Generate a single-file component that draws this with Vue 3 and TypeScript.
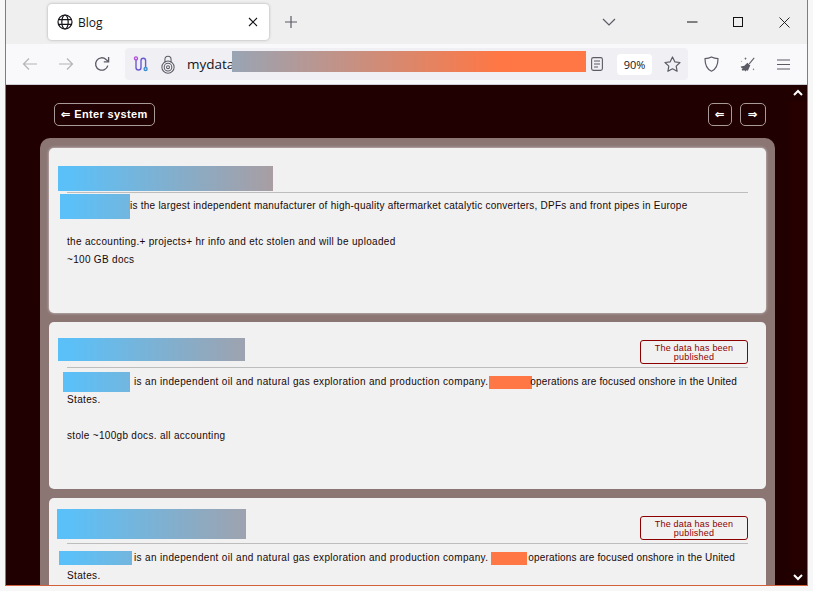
<template>
  <div class="screen">
    <div class="window">
      <div class="tabstrip">
        <div class="tab">
          <svg class="globe" width="16" height="16" viewBox="0 0 16 16" fill="none" stroke="#15141a" stroke-width="1.2">
            <circle cx="8" cy="8" r="7" />
            <ellipse cx="8" cy="8" rx="3.2" ry="7" />
            <path d="M1.2 5.6h13.6M1.2 10.4h13.6" />
          </svg>
          <span class="tab-title">Blog</span>
          <svg class="tab-close" width="10" height="10" viewBox="0 0 10 10" stroke="#15141a" stroke-width="1.1">
            <path d="M1 1l8 8M9 1l-8 8" />
          </svg>
        </div>
        <svg class="plus" width="14" height="14" viewBox="0 0 14 14" stroke="#5b5b66" stroke-width="1.2">
          <path d="M7 1v12M1 7h12" />
        </svg>
        <svg class="tabs-menu" width="14" height="8" viewBox="0 0 14 8" fill="none" stroke="#5b5b66" stroke-width="1.2">
          <path d="M1 1l6 6 6-6" />
        </svg>
        <svg class="win-btn min" width="11" height="2" viewBox="0 0 11 2" stroke="#111" stroke-width="1">
          <path d="M0 1h10.5" />
        </svg>
        <svg class="win-btn max" width="10" height="10" viewBox="0 0 10 10" fill="none" stroke="#111" stroke-width="1">
          <rect x="0.5" y="0.5" width="9" height="9" />
        </svg>
        <svg class="win-btn close" width="11" height="11" viewBox="0 0 11 11" stroke="#111" stroke-width="0.9">
          <path d="M.5.5l10 10M10.5.5l-10 10" />
        </svg>
      </div>

      <div class="toolbar">
        <svg class="tool back" width="16" height="14" viewBox="0 0 16 14" fill="none" stroke="#b4b4ba" stroke-width="1.2">
          <path d="M15 7H1.5M7 1.5L1.5 7 7 12.5" />
        </svg>
        <svg class="tool fwd" width="16" height="14" viewBox="0 0 16 14" fill="none" stroke="#b4b4ba" stroke-width="1.2">
          <path d="M1 7h13.5M9 1.5L14.5 7 9 12.5" />
        </svg>
        <svg class="tool reload" width="16" height="16" viewBox="0 0 16 16" fill="none" stroke="#5b5b66" stroke-width="1.3">
          <path d="M13.8 9.6A6.2 6.2 0 1 1 12 3.4L14.4 5.4" />
          <path d="M14.6 1v4.8H9.8" />
        </svg>
        <div class="urlbar">
          <svg class="ext" width="16" height="16" viewBox="0 0 16 16" fill="none" stroke-width="1.4">
            <path d="M3 3.500v8a2.500 2.500 0 0 0 5 0v-7a2.300 2.300 0 0 1 4.600 0v7" stroke="#6b5bd2" />
            <circle cx="3" cy="2.400" r="1.500" stroke="#b24fd8" />
            <circle cx="12.600" cy="13" r="1.500" stroke="#3a8fd0" />
          </svg>
          <svg class="onion" width="14" height="19" viewBox="0 0 13 18" fill="none" stroke="#5b5b66" stroke-width="1">
            <path d="M3.600 7V4a2.900 2.900 0 0 1 5.800 0v3" />
            <circle cx="6.500" cy="11.500" r="5.800" />
            <circle cx="6.500" cy="11.500" r="3.600" />
            <circle cx="6.500" cy="11.500" r="1.400" />
          </svg>
          <span class="url">mydata</span>
          <span class="url-hide"></span>
          <svg class="reader" width="12" height="14" viewBox="0 0 12 14" fill="none" stroke="#5b5b66" stroke-width="1.1">
            <rect x="0.6" y="0.6" width="10.8" height="12.8" rx="1.8" />
            <path d="M3 4h6M3 7h6M3 10h4" />
          </svg>
          <span class="zoom">90%</span>
          <svg class="star" width="17" height="16" viewBox="0 0 17 16" fill="none" stroke="#5b5b66" stroke-width="1.2" stroke-linejoin="round">
            <path d="M8.500 1l2.300 4.800 5.200.7-3.800 3.600.9 5.200-4.600-2.500-4.600 2.500.9-5.200L1 6.500l5.200-.7z" />
          </svg>
        </div>
        <svg class="tool shield" width="15" height="16" viewBox="0 0 15 16" fill="none" stroke="#5b5b66" stroke-width="1.2">
          <path d="M7.500 1c2 1 4 1.500 6.500 1.700 0 5.800-1.500 10.300-6.500 12.500C2.500 13 1 8.500 1 2.700 3.500 2.500 5.500 2 7.500 1z" />
        </svg>
        <svg class="tool broom" width="17" height="17" viewBox="0 0 17 17" fill="#5b5b66">
          <path d="M14.800 1.500l.8.7-5 6-.8-.7z" />
          <path d="M8.300 6.800l3 2.600-.8 1.500-1.600 3.900-1.500-.5-1 1.200-1.300-1.400-1.300.8-1.300-1.900 1.500-.8-1.800-.4-.5-1.300 3.700-.8 1-.9z" />
          <path d="M6.500 1l.4 1.200 1.100.4-1.100.4-.4 1.200-.4-1.200-1.100-.4 1.100-.4zM14.500 12l.3.9.9.3-.9.3-.3.9-.3-.9-.9-.3.9-.3zM2.300 4.500l.2.700.7.200-.7.2-.2.700-.2-.7-.7-.2.7-.2z" />
        </svg>
        <svg class="tool menu" width="13" height="11" viewBox="0 0 13 11" stroke="#5b5b66" stroke-width="1.1">
          <path d="M0 1h13M0 5.500h13M0 10h13" />
        </svg>
      </div>

      <div class="page">
        <div class="track"></div>
        <div class="top-row">
          <button class="sys-btn enter"><span class="arrow">⇐</span> Enter system</button>
          <div class="pager">
            <button class="sys-btn nav">⇐</button>
            <button class="sys-btn nav wide">⇒</button>
          </div>
        </div>

        <div class="panel">
          <article v-for="post in posts" :key="post.id" class="card" :class="'card-' + post.id">
            <div class="card-head">
              <span class="hide title-hide"></span>
              <div v-if="post.published" class="badge">The data has been published</div>
            </div>
            <div class="card-body">
              <p class="lead">
                <span class="hide name-hide"></span><span class="first">{{ post.first }}</span><span v-if="post.second" class="hide word-hide"></span><span class="rest">{{ post.second }}</span> <span>{{ post.tail }}</span>
              </p>
              <p v-for="line in post.lines" :key="line" class="line" :class="{ gap: line === post.lines[0] }">{{ line }}</p>
            </div>
          </article>
        </div>

        <svg class="scroll-up" width="10" height="7" viewBox="0 0 10 7" fill="none" stroke="#fff" stroke-width="2">
          <path d="M1 6l4-4 4 4" />
        </svg>
        <svg class="scroll-down" width="10" height="7" viewBox="0 0 10 7" fill="none" stroke="#fff" stroke-width="2">
          <path d="M1 1l4 4 4-4" />
        </svg>
      </div>
    </div>
  </div>
</template>

<script setup lang="ts">
interface Post {
  id: number
  published: boolean
  first: string
  second: string
  tail: string
  lines: string[]
}

const oil = 'is an independent oil and natural gas exploration and production company.'
const oilRest = 'operations are focused onshore in the United'

const posts: Post[] = [
  {
    id: 1,
    published: false,
    first: 'is the largest independent manufacturer of high-quality aftermarket catalytic converters, DPFs and front pipes in Europe',
    second: '',
    tail: '',
    lines: ['the accounting.+ projects+ hr info and etc stolen and will be uploaded', '~100 GB docs'],
  },
  { id: 2, published: true, first: oil, second: oilRest, tail: 'States.', lines: ['stole ~100gb docs. all accounting'] },
  { id: 3, published: true, first: oil, second: oilRest, tail: 'States.', lines: [] },
]
</script>

<style scoped>
.screen {
  height: 591px;
  padding: 0 5px 5px;
  box-sizing: border-box;
  background: #f7f7f7;
  overflow: hidden;
}
.window {
  height: 100%;
  display: flex;
  flex-direction: column;
  border: 1px solid #d2603a;
  border-top: 0;
  box-sizing: border-box;
  font-family: "Liberation Sans", Arial, sans-serif;
}
.tabstrip {
  height: 44px;
  flex: none;
  background: #efefef;
  display: flex;
  align-items: center;
  padding-left: 42px;
}
.tab {
  width: 221px;
  height: 36px;
  background: #fff;
  border-radius: 4px;
  box-shadow: 0 0 3px rgba(0, 0, 0, 0.3);
  display: flex;
  align-items: center;
  padding: 0 11px 0 9px;
  box-sizing: border-box;
}
.tab-title {
  margin-left: 5px;
  font: 12px "Open Sans", sans-serif;
  color: #15141a;
  flex: 1;
}
.plus {
  margin-left: 15px;
}
.tabs-menu {
  margin-left: 304px;
}
.min {
  margin-left: 71px;
}
.max {
  margin-left: 35px;
}
.close {
  margin-left: 36px;
}
.toolbar {
  height: 41px;
  flex: none;
  background: #f9f9fb;
  border-bottom: 1px solid #cfcfd8;
  box-sizing: border-box;
  display: flex;
  align-items: center;
  padding-left: 16px;
}
.fwd {
  margin-left: 20px;
}
.reload {
  margin-left: 20px;
}
.urlbar {
  width: 563px;
  height: 32px;
  margin-left: 15px;
  background: #f0f0f4;
  border-radius: 4px;
  display: flex;
  align-items: center;
  padding-left: 8px;
  box-sizing: border-box;
}
.onion {
  margin-left: 12px;
}
.url {
  margin-left: 12px;
  font: 13.5px "Open Sans", sans-serif;
  color: #15141a;
  width: 45px;
  white-space: nowrap;
}
.url-hide {
  width: 354px;
  height: 21px;
  margin-top: -6px;
  background: linear-gradient(90deg, #5bc0f8 70px, #ff7744 500px) fixed;
}
.reader {
  margin-left: 5px;
}
.zoom {
  width: 35px;
  height: 21px;
  margin-left: 14px;
  background: #fff;
  border-radius: 4px;
  text-align: center;
  font: 11px/21px "Open Sans", sans-serif;
  color: #15141a;
}
.star {
  margin-left: 12px;
}
.shield {
  margin-left: 16px;
}
.broom {
  margin-left: 20px;
}
.menu {
  margin-left: 21px;
}
.page {
  flex: 1;
  min-height: 0;
  position: relative;
  overflow: hidden;
  background: #200000;
  padding-top: 18px;
}
.track {
  position: absolute;
  right: 0;
  top: 16px;
  bottom: 16px;
  width: 17px;
  background: #260000;
}
.top-row {
  display: flex;
  justify-content: space-between;
  padding: 0 41px 0 48px;
  height: 35px;
}
.pager {
  display: flex;
  gap: 8px;
}
.sys-btn {
  height: 23px;
  border: 1px solid #a89a98;
  border-radius: 5px;
  background: transparent;
  color: #fff;
  font: bold 11px "Liberation Sans", Arial, sans-serif;
  letter-spacing: 0.35px;
  padding: 0 6px;
}
.enter {
  width: 101px;
  white-space: nowrap;
}
.nav {
  width: 24px;
  padding: 0;
}
.nav.wide {
  width: 26px;
}
.panel {
  position: relative;
  width: 735px;
  margin-left: 34px;
  background: #8b7674;
  border-radius: 10px 10px 0 0;
  padding: 10px 9px 0;
  box-sizing: border-box;
  display: flex;
  flex-direction: column;
  gap: 9px;
}
.card {
  background: #f1f1f1;
  border-radius: 5px;
  padding: 18px 18px 0;
  box-sizing: border-box;
  flex: none;
}
.card-1 {
  height: 165px;
  box-shadow: 0 0 3px rgba(255, 255, 255, 0.7);
}
.card-2 {
  height: 167px;
  padding-top: 16px;
}
.card-3 {
  height: 167px;
  padding-top: 11px;
}
.card-head {
  display: flex;
  justify-content: space-between;
  align-items: flex-end;
  height: 25px;
  padding-bottom: 1px;
  border-bottom: 1px solid #bdbdbd;
}
.card-2 .card-head {
  height: 28px;
  align-items: flex-start;
}
.card-3 .card-head {
  height: 33px;
  align-items: flex-start;
}
.hide {
  background: linear-gradient(90deg, #5bc0f8 70px, #ff7744 500px) fixed;
  flex: none;
}
.title-hide {
  display: block;
  width: 215px;
  height: 25px;
  margin-left: -9px;
}
.card-2 .title-hide {
  width: 187px;
  height: 23px;
}
.card-3 .title-hide {
  width: 189px;
  height: 30px;
  margin-left: -10px;
}
.badge {
  width: 108px;
  height: 24px;
  box-sizing: border-box;
  border: 1px solid #8b0000;
  border-radius: 3px;
  color: #8b0000;
  font-size: 9px;
  letter-spacing: 0.2px;
  line-height: 9px;
  text-align: center;
  padding: 3px 10px 0;
}
.card-2 .badge {
  margin-top: 2px;
}
.card-3 .badge {
  margin-top: 7px;
}
.card-body {
  font-size: 10px;
  letter-spacing: 0.31px;
  color: #170808;
}
p {
  margin: 0;
}
.lead {
  line-height: 18px;
  margin-top: 4px;
}
.card-1 .lead {
  letter-spacing: 0.245px;
}
.card-2 .lead,
.card-3 .lead {
  margin-top: 5px;
  letter-spacing: 0.34px;
}
.rest {
  letter-spacing: 0.16px;
}
.line {
  line-height: 18px;
}
.line.gap {
  margin-top: 18px;
}
.name-hide {
  display: inline-block;
  vertical-align: middle;
  width: 70px;
  height: 25px;
  margin: -8px 0 -8px -7px;
}
.card-2 .name-hide {
  width: 67px;
  height: 20px;
  margin: -6px 4px -6px -4px;
}
.card-3 .name-hide {
  width: 73px;
  height: 14px;
  margin: -4px 2px -4px -8px;
}
.word-hide {
  display: inline-block;
  vertical-align: middle;
  width: 43px;
  height: 13px;
  margin: -3px -2px -3px 1px;
}
.card-3 .word-hide {
  width: 36px;
  margin-left: 3px;
  margin-right: 1px;
}
.scroll-up,
.scroll-down {
  position: absolute;
  right: 4px;
}
.scroll-up {
  top: 4px;
}
.scroll-down {
  bottom: 4px;
}
</style>
